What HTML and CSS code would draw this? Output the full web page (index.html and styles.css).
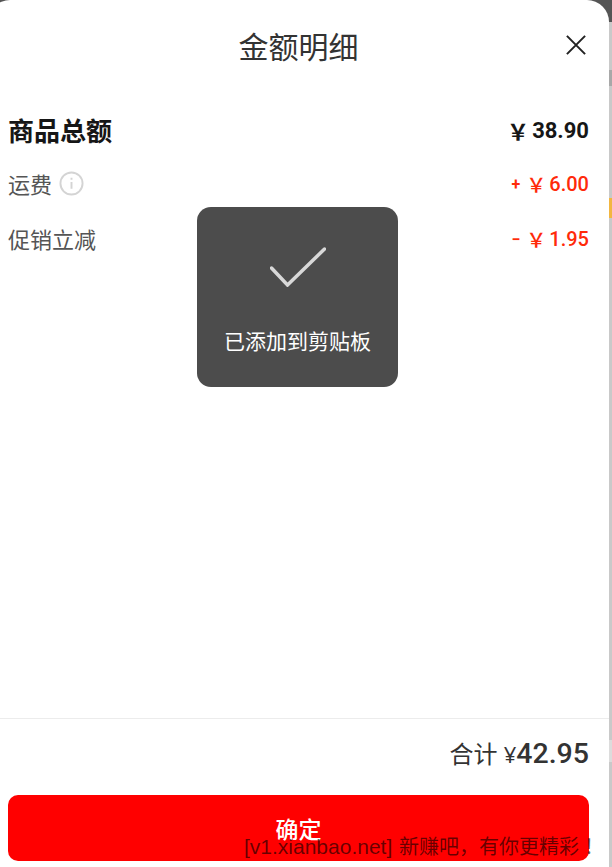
FILE: index.html
```html
<!DOCTYPE html>
<html lang="zh-CN">
<head>
  <meta charset="UTF-8"/>
  <meta name="viewport" content="width=device-width, initial-scale=1.0"/>
  <title>金额明细</title>
  <link rel="stylesheet" href="styles.css">
</head>
<body>
  <div class="backdrop">
    <i class="mark mark-grey"></i>
    <i class="mark mark-orange"></i>
    <i class="mark mark-low"></i>
    <section class="sheet">
      <header class="sheet-head">
        <h1>金额明细</h1>
        <button class="close" aria-label="关闭">
          <svg viewBox="0 0 22 22"><path d="M1 1l20 20M21 1L1 21"/></svg>
        </button>
      </header>
      <div class="rows">
        <div class="row row-total">
          <span>商品总额</span>
          <span class="amount"><span class="yen">￥</span>38.90</span>
        </div>
        <div class="row row-fee">
          <span class="fee-label">运费
            <svg class="info" viewBox="0 0 26 26"><circle cx="13" cy="13" r="11.5"/><path d="M13 11.5v7M13 7v2"/></svg>
          </span>
          <span class="amount red"><span class="sign">+</span><span class="yen">￥</span>6.00</span>
        </div>
        <div class="row row-fee">
          <span class="fee-label">促销立减</span>
          <span class="amount red"><span class="sign">−</span><span class="yen">￥</span>1.95</span>
        </div>
      </div>
      <footer class="sheet-foot">
        <div class="sum">合计 <span class="sum-cur">¥</span><b>42.95</b></div>
        <button class="confirm">确定</button>
      </footer>
    </section>
    <div class="toast" role="status">
      <svg viewBox="0 0 56 40"><path d="M1.5 21L17.5 38 54.500 2"/></svg>
      <p>已添加到剪贴板</p>
    </div>
    <div class="watermark">[v1.xianbao.net] <span class="watermark-cjk">新赚吧，有你更精彩<span class="watermark-end">！</span></span></div>
  </div>
</body>
</html>
```

FILE: styles.css
```css
:root {
  --red: #ff2a0a;
  --text: #333;
  --font-stack: "Open Sans", "Noto Sans CJK SC", sans-serif;
  --num-stack: Roboto, "Noto Sans CJK SC", sans-serif;
}
*, *::before, *::after { box-sizing: border-box; }
html, body { height: 100%; }
body {
  margin: 0;
  font-family: var(--font-stack);
  color: var(--text);
  overflow: hidden;
}
.backdrop {
  position: relative;
  height: 867px;
  padding-right: 3px;
  background: linear-gradient(#555 0 22px, #c9c9c9 22px);
  overflow: hidden;
}
.mark { position: absolute; right: 0; width: 3px; }
.mark-grey { top: 70px; height: 16px; background: #a8a8a8; }
.mark-orange { top: 198px; height: 20px; background: #f2b640; }
.mark-low { top: 740px; height: 22px; background: #dcdcdc; }

/* sheet runs past the left edge of the window */
.sheet {
  position: relative;
  height: 100%;
  margin-left: -12px;
  display: flex;
  flex-direction: column;
  background: #fff;
  border-radius: 22px 22px 0 0;
}
.sheet-head {
  height: 96px;
  flex: none;
  display: flex;
  align-items: center;
  justify-content: center;
  position: relative;
}
h1 {
  margin: 0 0 6px;
  font-size: 30px;
  font-weight: 400;
  color: #333;
}
.close {
  position: absolute;
  top: 35px;
  right: 23px;
  width: 20px;
  height: 20px;
  padding: 0;
  border: none;
  background: none;
}
.close svg { display: block; fill: none; stroke: #222; stroke-width: 2.200; }
.rows {
  flex: 1;
  padding: 16px 20px 0;
}
.row {
  display: flex;
  justify-content: space-between;
  align-items: center;
}
.row-total {
  height: 36px;
  margin-bottom: 22px;
  font-size: 26px;
  font-weight: 700;
  color: #161616;
}
.row-fee {
  height: 28px;
  margin-bottom: 27px;
  font-size: 22px;
  color: #555;
}
.fee-label { display: flex; align-items: center; gap: 7px; margin-bottom: 3px; }
.info { width: 25px; height: 25px; margin-top: 1px; fill: none; stroke: #d4d4d4; stroke-width: 2; }
.amount {
  display: flex;
  align-items: center;
  font-family: var(--num-stack);
  font-size: 22px;
  font-weight: 700;
}
.row-fee .amount { font-size: 20px; font-weight: 500; }
.yen { margin-right: 3px; font-family: "Noto Sans CJK SC", sans-serif; }
.sign { margin-right: 6px; font-size: 16px; font-weight: 700; }
.red { color: var(--red); }
.sheet-foot {
  flex: none;
  height: 149px;
  border-top: 1px solid #ececec;
  padding: 16px 20px 6px;
  display: flex;
  flex-direction: column;
  justify-content: space-between;
}
.sum { text-align: right; font-size: 24px; line-height: 38px; color: #333; }
.sum-cur { font-size: 22px; }
.sum b { font-family: var(--num-stack); font-size: 28.5px; font-weight: 500; }
.confirm {
  height: 66px;
  border: none;
  border-radius: 10px;
  background: #f00;
  color: #fff;
  font-family: var(--font-stack);
  font-size: 23px;
  font-weight: 500;
}
.toast {
  position: absolute;
  top: 207px;
  left: 197px;
  width: 201px;
  height: 180px;
  padding-top: 40px;
  border-radius: 14px;
  background: #4c4c4c;
  text-align: center;
}
.toast svg { display: block; width: 56px; height: 40px; margin: 0 auto; fill: none; stroke: #d8d8d8; stroke-width: 3.500; stroke-linecap: round; }
.toast p { margin: 41px 0 0; font-size: 21px; line-height: 26px; color: #fff; white-space: nowrap; }
.watermark {
  position: absolute;
  left: 244px;
  top: 833px;
  font-family: "Liberation Sans", sans-serif;
  font-size: 21px;
  line-height: 26px;
  white-space: nowrap;
  color: rgba(0, 0, 0, 0.6);
}
.watermark-cjk { margin-left: 1px; font-family: "Noto Sans CJK TC", sans-serif; font-size: 20px; }
.watermark-end { margin-left: 5px; }
```
